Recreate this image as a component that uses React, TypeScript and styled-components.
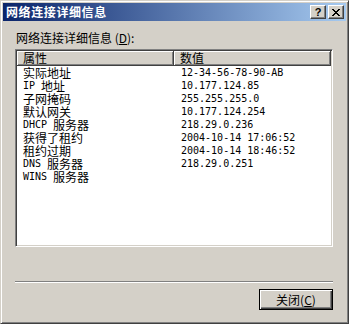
import React from "react";
import styled, { createGlobalStyle } from "styled-components";

const GlobalStyle = createGlobalStyle`
  html, body {
    margin: 0;
    padding: 0;
    background: #d4d0c8;
  }
  body {
    font-family: "Noto Sans CJK SC", "Liberation Sans", sans-serif;
    font-size: 12px;
    color: #000;
  }
  * {
    box-sizing: border-box;
  }
`;

const rows: [string, string][] = [
  ["实际地址", "12-34-56-78-90-AB"],
  ["IP 地址", "10.177.124.85"],
  ["子网掩码", "255.255.255.0"],
  ["默认网关", "10.177.124.254"],
  ["DHCP 服务器", "218.29.0.236"],
  ["获得了租约", "2004-10-14 17:06:52"],
  ["租约过期", "2004-10-14 18:46:52"],
  ["DNS 服务器", "218.29.0.251"],
  ["WINS 服务器", ""],
];

// latin runs in the list are drawn half-width, like the old bitmap font
const Mixed = ({ text }: { text: string }) => (
  <>
    {text.split(/([\x00-\x7f]+)/).filter(Boolean).map((part, i) =>
      /^[\x00-\x7f]+$/.test(part) ? <Mono key={i}>{part}</Mono> : <Han key={i}>{part}</Han>
    )}
  </>
);

const CloseGlyph = () => (
  <svg width="8" height="7" viewBox="0 0 8 7" shapeRendering="crispEdges">
    <path
      fill="#000"
      d="M0 0h2v1H0zM6 0h2v1H6zM1 1h2v1H1zM5 1h2v1H5zM2 2h4v1H2zM3 3h2v1H3zM2 4h4v1H2zM1 5h2v1H1zM5 5h2v1H5zM0 6h2v1H0zM6 6h2v1H6z"
    />
  </svg>
);

const App = () => {
  return (
    <>
      <GlobalStyle />
      <Window>
        <TitleBar>
          <Title>网络连接详细信息</Title>
          <CapButton>
            <HelpMark>?</HelpMark>
          </CapButton>
          <CapButton>
            <CloseGlyph />
          </CapButton>
        </TitleBar>
        <Body>
          <Caption>
            网络连接详细信息 (<u>D</u>):
          </Caption>
          <ListBox>
            <HeaderRow>
              <HeaderCell>属性</HeaderCell>
              <HeaderCell>数值</HeaderCell>
            </HeaderRow>
            {rows.map(([name, value]) => (
              <Row key={name}>
                <Cell>
                  <Mixed text={name} />
                </Cell>
                <Cell $value>
                  <Mixed text={value} />
                </Cell>
              </Row>
            ))}
          </ListBox>
          <Separator />
          <Footer>
            <PushButton>
              关闭(<u>C</u>)
            </PushButton>
          </Footer>
        </Body>
      </Window>
    </>
  );
};

const Window = styled.div`
  width: 349px;
  height: 324px;
  display: flex;
  flex-direction: column;
  background: #d4d0c8;
  border: 1px solid;
  border-color: #d4d0c8 #404040 #404040 #d4d0c8;
  box-shadow: inset 1px 1px #fff, inset -1px -1px #808080;
  padding: 2px;
`;

const TitleBar = styled.div`
  flex: none;
  height: 18px;
  display: flex;
  align-items: center;
  padding: 0 2px 0 3px;
  background: linear-gradient(to right, #0a246a, #a6caf0);
`;

const Title = styled.span`
  flex: 1;
  color: #fff;
  font-weight: bold;
  font-size: 12px;
  letter-spacing: 0.6px;
  line-height: 18px;
  white-space: nowrap;
`;

const CapButton = styled.button`
  width: 16px;
  height: 14px;
  margin: 0 0 0 2px;
  padding: 0;
  display: flex;
  align-items: center;
  justify-content: center;
  background: #d4d0c8;
  border: 1px solid;
  border-color: #fff #404040 #404040 #fff;
  box-shadow: inset -1px -1px #808080;
`;

const HelpMark = styled.span`
  font-family: "Liberation Sans", sans-serif;
  font-weight: bold;
  font-size: 11px;
  line-height: 11px;
  color: #000;
`;

const Body = styled.div`
  flex: 1;
  display: flex;
  flex-direction: column;
  padding: 10px 13px 0 12px;
`;

const Caption = styled.div`
  line-height: 14px;
  margin: 0 0 4px 1px;
  white-space: nowrap;
`;

const ListBox = styled.div`
  height: 198px;
  background: #fff;
  border: 1px solid;
  border-color: #808080 #fff #fff #808080;
  box-shadow: inset 1px 1px #404040, inset -1px -1px #d4d0c8;
  padding: 1px;
  overflow: hidden;
`;

const HeaderRow = styled.div`
  display: grid;
  grid-template-columns: 157px 1fr;
  height: 15px;
`;

const HeaderCell = styled.div`
  background: #d4d0c8;
  border-right: 1px solid #404040;
  border-bottom: 1px solid #404040;
  box-shadow: inset 1px 1px #fff, inset -1px -1px #808080;
  padding-left: 6px;
  line-height: 14px;
  white-space: nowrap;
`;

const Row = styled.div`
  display: grid;
  grid-template-columns: 157px 1fr;
  height: 13px;
  line-height: 13px;
  white-space: nowrap;
`;

const Cell = styled.div<{ $value?: boolean }>`
  display: flex;
  align-items: center;
  height: 13px;
  padding-left: ${(p) => (p.$value ? "7px" : "6px")};
`;

const Han = styled.span`
  display: block;
  font-size: 12px;
  line-height: 13px;
  white-space: pre;
`;

const Mono = styled.span`
  display: block;
  font-family: "DejaVu Sans Mono", monospace;
  font-size: 10px;
  line-height: 13px;
  white-space: pre;
`;

const Separator = styled.div`
  margin-top: 34px;
  height: 2px;
  border-top: 1px solid #808080;
  border-bottom: 1px solid #fff;
`;

const Footer = styled.div`
  display: flex;
  justify-content: flex-end;
  margin-top: 6px;
`;

const PushButton = styled.button`
  width: 74px;
  height: 21px;
  padding: 0;
  font-family: "Noto Sans CJK SC", "Liberation Sans", sans-serif;
  font-size: 12px;
  color: #000;
  background: #d4d0c8;
  border: 1px solid #000;
  box-shadow: inset 1px 1px #fff, inset -1px -1px #404040, inset -2px -2px #808080;
`;

export default App;
